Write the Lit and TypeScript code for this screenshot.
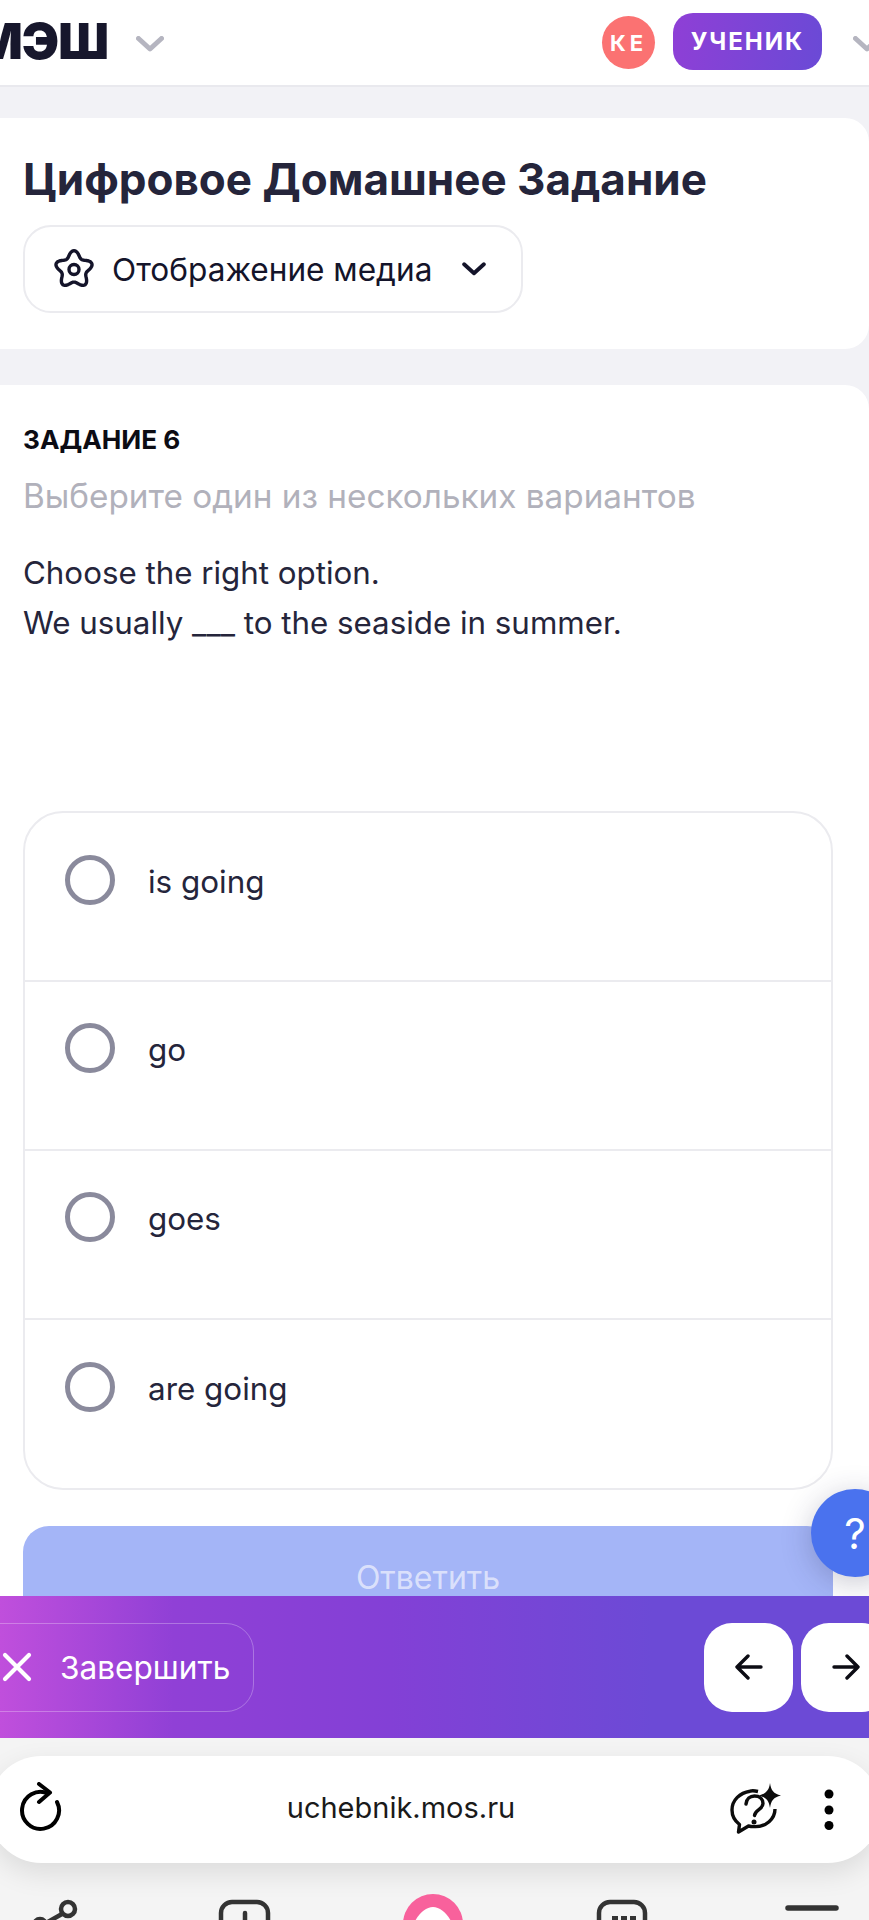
import { LitElement, html, css, svg } from "lit";
import { customElement } from "lit/decorators.js";

const options = ["is going", "go", "goes", "are going"];

function gearPath(): string {
  const pts: string[] = [];
  for (let i = 0; i < 120; i++) {
    const t = (i / 120) * Math.PI * 2;
    const r = 12.6 + 6.2 * Math.pow(0.5 + 0.5 * Math.cos(5 * t), 1.2);
    const x = 20 + r * Math.sin(t);
    const y = 20.5 - r * Math.cos(t);
    pts.push(`${x.toFixed(2)} ${y.toFixed(2)}`);
  }
  return "M" + pts.join("L") + "Z";
}

const chevron = (w: number, h: number, color: string, sw: number) => html`<svg width=${w} height=${h} viewBox="0 0 28 16" fill="none">
  <path d="M2.5 2.5 14 13 25.5 2.5" stroke=${color} stroke-width=${sw} stroke-linecap="round" stroke-linejoin="round"/>
</svg>`;

@customElement("app-root")
export class AppRoot extends LitElement {
  static styles = css`
    :host {
      display: block;
      position: relative;
      width: 869px;
      height: 1920px;
      overflow: hidden;
      background: #f2f2f6;
      font-family: Inter, "Liberation Sans", sans-serif;
      color: #25253b;
    }
    .header {
      height: 85px;
      background: #fff;
      border-bottom: 2px solid #e9e9ee;
      display: flex;
      align-items: center;
    }
    .logo {
      margin-left: -25px;
      font-size: 50px;
      font-weight: 900;
      color: #17172c;
      line-height: 1;
      letter-spacing: -1px;
      margin-top: -3px;
    }
    .logo-chev {
      margin-left: 28px;
      display: flex;
      margin-top: 3px;
    }
    .spacer { flex: 1; }
    .avatar {
      width: 53px;
      height: 53px;
      border-radius: 50%;
      background: #fb7272;
      color: #fff;
      font-weight: 700;
      font-size: 22px;
      letter-spacing: 4px;
      display: flex;
      align-items: center;
      justify-content: center;
      margin-right: 18px;
    }
    .role {
      width: 149px;
      height: 57px;
      border-radius: 20px;
      background: linear-gradient(100deg, #8f3fd6, #6a4ad6);
      color: #fff;
      font-weight: 700;
      font-size: 24px;
      letter-spacing: 2px;
      display: flex;
      align-items: center;
      justify-content: center;
      margin-top: -3px;
    }
    .role-chev {
      margin-left: 31px;
      margin-right: -12px;
      display: flex;
      margin-top: 3px;
    }
    .card {
      background: #fff;
      border-radius: 24px;
      margin-left: -24px;
      padding-left: 47px;
      padding-right: 36px;
    }
    .card.top {
      margin-top: 31px;
      padding-top: 36px;
      padding-bottom: 36px;
    }
    h1 {
      margin: 0 0 21px;
      font-size: 44px;
      line-height: 50px;
      font-weight: 700;
      white-space: nowrap;
    }
    .dropdown {
      box-sizing: border-box;
      width: 500px;
      height: 88px;
      border: 2px solid #ebebef;
      border-radius: 28px;
      display: flex;
      align-items: center;
      padding-left: 29px;
      font-size: 31.6px;
      color: #14142a;
    }
    .dropdown .label { margin-left: 18px; white-space: nowrap; }
    .dropdown .chev { margin-left: 30px; display: flex; }
    .card.task {
      margin-top: 36px;
      padding-top: 39px;
      height: 1400px;
    }
    .task-no {
      font-size: 26.2px;
      line-height: 32px;
      font-weight: 700;
      color: #0c0c14;
    }
    .hint {
      margin-top: 20px;
      font-size: 33.3px;
      line-height: 40px;
      color: #b1b1bb;
      white-space: nowrap;
    }
    .question {
      margin-top: 32px;
      font-size: 31.3px;
      line-height: 50px;
      color: #25253b;
      white-space: nowrap;
    }
    .options {
      margin-top: 163px;
      box-sizing: border-box;
      height: 679px;
      border: 2px solid #ebebef;
      border-radius: 40px;
      display: flex;
      flex-direction: column;
    }
    .option {
      flex: none;
      height: 169px;
      box-sizing: border-box;
      display: flex;
      align-items: flex-start;
      padding: 41px 0 0 40px;
      border-bottom: 2px solid #ebebef;
      font-size: 31.4px;
      line-height: 50px;
    }
    .option:first-child { padding-top: 42px; }
    .option:last-child { border-bottom: none; flex: 1; padding-top: 42px; }
    .radio {
      flex: none;
      width: 50px;
      height: 50px;
      box-sizing: border-box;
      border: 5px solid #8a8a9c;
      border-radius: 50%;
      margin-right: 33px;
    }
    .option span { margin-top: 2px; }
    .submit {
      margin-top: 36px;
      height: 120px;
      border-radius: 26px;
      background: #a4b5f7;
      color: rgba(255, 255, 255, 0.62);
      font-size: 32px;
      font-weight: 400;
      text-align: center;
      line-height: 104px;
    }
    .fab {
      position: absolute;
      left: 811px;
      top: 1489px;
      width: 88px;
      height: 88px;
      border-radius: 50%;
      background: #4a72ee;
      color: #fff;
      box-shadow: 0 6px 30px rgba(40, 40, 80, 0.25);
      font-size: 42px;
      font-weight: 400;
      display: flex;
      align-items: center;
      justify-content: center;
    }
    .bottom {
      position: absolute;
      left: 0;
      right: 0;
      top: 1596px;
    }
    .bar {
      height: 142px;
      background: linear-gradient(90deg, #c04fdc 0%, #9040d6 20%, #8340d6 45%, #6c4ad6 75%, #6c4ad6 100%);
      display: flex;
      align-items: center;
      overflow: hidden;
    }
    .finish {
      box-sizing: border-box;
      margin-left: -30px;
      width: 284px;
      height: 89px;
      border: 1px solid rgba(255, 255, 255, 0.28);
      border-radius: 28px;
      display: flex;
      align-items: center;
      padding-left: 31px;
      color: #fff;
      font-size: 31.6px;
      font-weight: 400;
      flex: none;
    }
    .finish span { margin-left: 28px; }
    .nav-btn {
      flex: none;
      width: 89px;
      height: 89px;
      border-radius: 28px;
      background: #fff;
      display: flex;
      align-items: center;
      justify-content: center;
    }
    .nav-btn.prev { margin-left: auto; }
    .nav-btn.next { margin-left: 8px; margin-right: -21px; }
    .chrome {
      height: 182px;
      background: #f4f4f4;
      overflow: hidden;
      padding-top: 18px;
      box-sizing: border-box;
    }
    .pill {
      position: relative;
      box-sizing: border-box;
      margin: 0 -12px;
      height: 107px;
      background: #fff;
      border-radius: 54px;
      box-shadow: 0 10px 28px rgba(0, 0, 0, 0.1);
      display: flex;
      align-items: center;
      padding-left: 32px;
      padding-right: 46px;
    }
    .url {
      flex: 1;
      text-align: center;
      font-size: 29px;
      color: #1a1a1a;
      margin-right: -9px;
      margin-bottom: 4px;
    }
    .pill svg { flex: none; display: block; }
    .reload { margin-bottom: 6px; }
    .dots { margin-left: 40px; }
    .tabs { display: block; position: relative; }
  `;

  render() {
    return html`
      <div class="header">
        <div class="logo">МЭШ</div>
        <div class="logo-chev">${chevron(28, 16, "#b5b5c0", 5)}</div>
        <div class="spacer"></div>
        <div class="avatar">КЕ</div>
        <div class="role">УЧЕНИК</div>
        <div class="role-chev">${chevron(28, 16, "#b5b5c0", 5)}</div>
      </div>

      <div class="card top">
        <h1>Цифровое Домашнее Задание</h1>
        <div class="dropdown">
          <svg width="40" height="40" viewBox="0 0 40 40" fill="none" stroke="#14142a" stroke-width="3.4" stroke-linejoin="round">
            <path d=${gearPath()}/>
            <circle cx="20" cy="20.5" r="5"/>
          </svg>
          <div class="label">Отображение медиа</div>
          <div class="chev">${chevron(24, 14, "#14142a", 4.5)}</div>
        </div>
      </div>

      <div class="card task">
        <div class="task-no">ЗАДАНИЕ 6</div>
        <div class="hint">Выберите один из нескольких вариантов</div>
        <div class="question">Choose the right option.<br>We usually ___ to the seaside in summer.</div>
        <div class="options">
          ${options.map((o) => html`<div class="option"><div class="radio"></div><span>${o}</span></div>`)}
        </div>
        <div class="submit">Ответить</div>
      </div>

      <div class="fab">?</div>

      <div class="bottom">
        <div class="bar">
          <div class="finish">
            <svg width="30" height="30" viewBox="0 0 30 30" fill="none" stroke="#fff" stroke-width="4.2" stroke-linecap="round">
              <path d="M3 3 27 27M27 3 3 27"/>
            </svg>
            <span>Завершить</span>
          </div>
          <div class="nav-btn prev">
            <svg width="28" height="26" viewBox="0 0 28 26" fill="none" stroke="#0c0c14" stroke-width="3.4" stroke-linecap="round" stroke-linejoin="round">
              <path d="M26 13H2M13 2 2 13l11 11"/>
            </svg>
          </div>
          <div class="nav-btn next">
            <svg width="28" height="26" viewBox="0 0 28 26" fill="none" stroke="#0c0c14" stroke-width="3.4" stroke-linecap="round" stroke-linejoin="round">
              <path d="M2 13h24M15 2l11 11-11 11"/>
            </svg>
          </div>
        </div>
        <div class="chrome">
          <div class="pill">
            <svg class="reload" width="44" height="50" viewBox="0 0 44 50" fill="none" stroke="#000" stroke-width="4" stroke-linecap="round" stroke-linejoin="round">
              <path d="M28 11.500A18.500 18.500 0 1 0 37 20"/>
              <path d="M19 2 30 10.500 19 20"/>
            </svg>
            <div class="url">uchebnik.mos.ru</div>
            <svg width="54" height="54" viewBox="0 0 54 54" fill="none">
              <path d="M29 8.500C26 7.800 23 7.500 21 8.200 11 9.700 3 17 3 27c0 6 3 11 7.500 14.500L9.500 49l10-6c2 .5 4 .7 6 .6C37 44 46 36 46 26" stroke="#0c0c0c" stroke-width="3.4" stroke-linejoin="round"/>
              <path d="M17 21c.5-5 4-8 8.500-8 5 0 8.500 3 8.500 7.500 0 6-8 6-8.500 12" stroke="#0c0c0c" stroke-width="3.4" stroke-linecap="round"/>
              <circle cx="25" cy="39" r="2.500" fill="#0c0c0c"/>
              <path d="M41 0c1 7.500 3.500 10.500 11 12.500-7.500 2-10 5-11 12.500-1-7.500-4-10.500-11-12.500 7-2 10-5 11-12.500z" fill="#0c0c0c"/>
            </svg>
            <svg class="dots" width="12" height="44" viewBox="0 0 12 44" fill="#000">
              <circle cx="6" cy="6" r="4.500"/><circle cx="6" cy="22" r="4.500"/><circle cx="6" cy="37.500" r="4.500"/>
            </svg>
          </div>
          <svg class="tabs" width="869" height="57" viewBox="0 0 869 57" fill="none" stroke="#333" stroke-width="4.500" stroke-linecap="round">
            ${svg`
              <circle cx="68" cy="46" r="7"/>
              <path d="M62 51 46 60"/>
              <circle cx="40" cy="62" r="6" fill="#333"/>
              <rect x="221" y="39" width="47" height="50" rx="11"/>
              <path d="M245 50v16"/>
              <circle cx="433" cy="61" r="30" fill="#f8619c" stroke="none"/>
              <path d="M433 44C440 44 447 50 452 60H414C419 50 426 44 433 44Z" fill="#fff" stroke="none"/>
              <rect x="599" y="39" width="46" height="50" rx="11"/>
              <path d="M612 55h25" stroke-dasharray="6 3" stroke-linecap="butt" stroke-width="4"/>
              <path d="M788 45h48" stroke-width="5.500"/>
            `}
          </svg>
        </div>
      </div>
    `;
  }
}
